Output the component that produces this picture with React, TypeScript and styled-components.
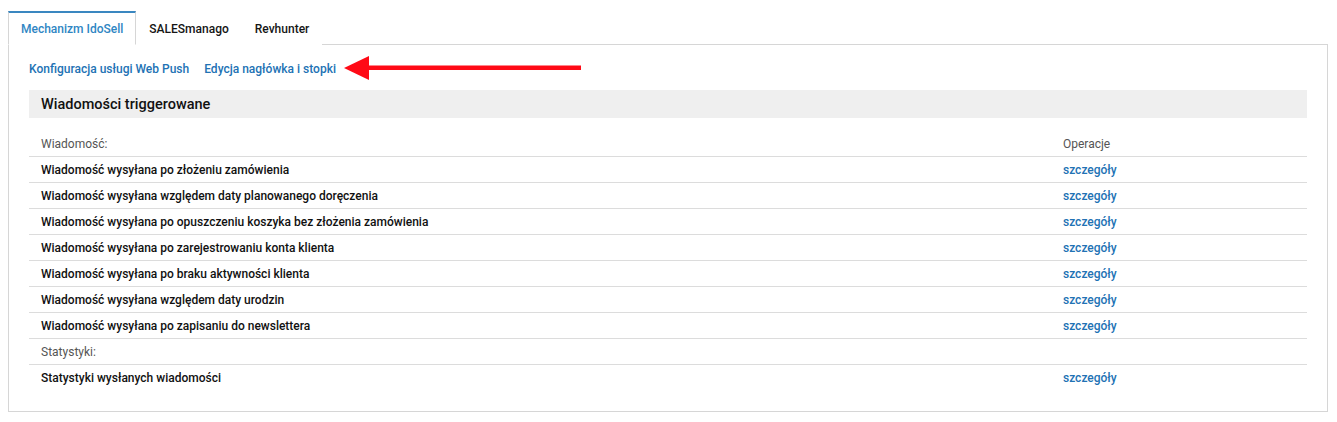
import React from 'react'
import styled, { createGlobalStyle } from 'styled-components'

const GlobalStyle = createGlobalStyle`
  body {
    margin: 0;
    background: #fff;
    font-family: Roboto, "Noto Sans", Arial, sans-serif;
    color: #111;
  }
`

const Page = styled.div`
  padding: 11px 9px 0 8px;
`

const TabBar = styled.div`
  display: flex;
  align-items: flex-end;
  margin-bottom: -1px;
  position: relative;
  z-index: 1;
`

const Tab = styled.div<{ $active?: boolean }>`
  height: 31px;
  padding: 0 12px;
  display: flex;
  align-items: center;
  font-size: 12px;
  font-weight: 500;
  color: ${(p) => (p.$active ? '#2f86c3' : '#151515')};
  background: #fff;
  border-top: 2px solid ${(p) => (p.$active ? '#3a87c0' : 'transparent')};
  border-left: 1px solid ${(p) => (p.$active ? '#d6d6d6' : 'transparent')};
  border-right: 1px solid ${(p) => (p.$active ? '#d6d6d6' : 'transparent')};
  border-bottom: 1px solid ${(p) => (p.$active ? '#fff' : 'transparent')};
`

const Panel = styled.div`
  border: 1px solid #d6d6d6;
  padding: 16px 20px 20px 20px;
`

const LinkRow = styled.div`
  display: flex;
  align-items: center;
  height: 16px;
  margin-bottom: 13px;
`

const Link = styled.a`
  font-size: 12px;
  font-weight: 500;
  color: #2272b4;
  text-decoration: none;
  margin-right: 15px;
  cursor: pointer;
`

const Arrow = styled.svg`
  margin-left: -7px;
  margin-top: -2px;
  flex-shrink: 0;
`

const SectionTitle = styled.div`
  background: #efefef;
  height: 28px;
  padding: 0 12px;
  display: flex;
  align-items: center;
  font-size: 14.5px;
  font-weight: 500;
  color: #111;
  margin-bottom: 13px;
`

const Table = styled.table`
  width: 100%;
  border-collapse: collapse;
`

const Row = styled.tr<{ $last?: boolean }>`
  border-bottom: 1px solid ${(p) => (p.$last ? 'transparent' : '#dcdcdc')};
`

const Cell = styled.td<{ $label?: boolean; $ops?: boolean }>`
  height: 25px;
  padding: 0 12px;
  font-size: 12px;
  font-weight: ${(p) => (p.$label ? 400 : 500)};
  color: ${(p) => (p.$label ? '#555' : '#111')};
  width: ${(p) => (p.$ops ? '232px' : 'auto')};
  vertical-align: middle;
`

const DetailLink = styled.a`
  font-size: 12px;
  font-weight: 500;
  color: #2272b4;
  text-decoration: none;
  cursor: pointer;
`

const messages = [
  'Wiadomość wysyłana po złożeniu zamówienia',
  'Wiadomość wysyłana względem daty planowanego doręczenia',
  'Wiadomość wysyłana po opuszczeniu koszyka bez złożenia zamówienia',
  'Wiadomość wysyłana po zarejestrowaniu konta klienta',
  'Wiadomość wysyłana po braku aktywności klienta',
  'Wiadomość wysyłana względem daty urodzin',
  'Wiadomość wysyłana po zapisaniu do newslettera',
]

function App() {
  return (
    <>
      <GlobalStyle />
      <Page>
        <TabBar>
          <Tab $active>Mechanizm IdoSell</Tab>
          <Tab>SALESmanago</Tab>
          <Tab>Revhunter</Tab>
        </TabBar>
        <Panel>
          <LinkRow>
            <Link>Konfiguracja usługi Web Push</Link>
            <Link>Edycja nagłówka i stopki</Link>
            <Arrow width="238" height="26" viewBox="0 0 238 26">
              <polygon points="0,13 25,1 25,25" fill="#ff0a16" />
              <rect x="22" y="10.5" width="215" height="4.5" fill="#ff0a16" />
            </Arrow>
          </LinkRow>
          <SectionTitle>Wiadomości triggerowane</SectionTitle>
          <Table>
            <tbody>
              <Row>
                <Cell $label>Wiadomość:</Cell>
                <Cell $label $ops>Operacje</Cell>
              </Row>
              {messages.map((m) => (
                <Row key={m}>
                  <Cell>{m}</Cell>
                  <Cell $ops>
                    <DetailLink>szczegóły</DetailLink>
                  </Cell>
                </Row>
              ))}
              <Row>
                <Cell $label>Statystyki:</Cell>
                <Cell $ops />
              </Row>
              <Row $last>
                <Cell>Statystyki wysłanych wiadomości</Cell>
                <Cell $ops>
                  <DetailLink>szczegóły</DetailLink>
                </Cell>
              </Row>
            </tbody>
          </Table>
        </Panel>
      </Page>
    </>
  )
}

export default App
